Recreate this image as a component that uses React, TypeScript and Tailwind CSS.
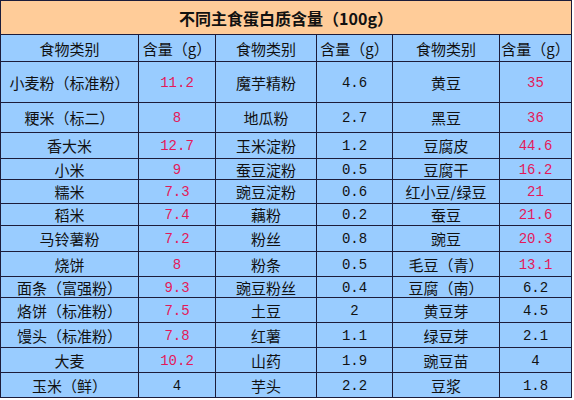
import { Fragment } from 'react';

const ROWS: Array<[string, string, string, string, string, string]> = [
  ['小麦粉（标准粉）', '11.2', '魔芋精粉', '4.6', '黄豆', '35'],
  ['粳米（标二）', '8', '地瓜粉', '2.7', '黑豆', '36'],
  ['香大米', '12.7', '玉米淀粉', '1.2', '豆腐皮', '44.6'],
  ['小米', '9', '蚕豆淀粉', '0.5', '豆腐干', '16.2'],
  ['糯米', '7.3', '豌豆淀粉', '0.6', '红小豆/绿豆', '21'],
  ['稻米', '7.4', '藕粉', '0.2', '蚕豆', '21.6'],
  ['马铃薯粉', '7.2', '粉丝', '0.8', '豌豆', '20.3'],
  ['烧饼', '8', '粉条', '0.5', '毛豆（青）', '13.1'],
  ['面条（富强粉）', '9.3', '豌豆粉丝', '0.4', '豆腐（南）', '6.2'],
  ['烙饼（标准粉）', '7.5', '土豆', '2', '黄豆芽', '4.5'],
  ['馒头（标准粉）', '7.8', '红薯', '1.1', '绿豆芽', '2.1'],
  ['大麦', '10.2', '山药', '1.9', '豌豆苗', '4'],
  ['玉米（鲜）', '4', '芋头', '2.2', '豆浆', '1.8'],
];

// rows whose last column is printed in red
const RED_LAST = 8;

const cjk = "font-['Noto_Sans_CJK_SC',sans-serif]";
const mono = "font-['Liberation_Mono','Noto_Sans_CJK_SC',monospace]";

function Cell({ text, num, red }: { text: string; num?: boolean; red?: boolean }) {
  return (
    <div
      className={`flex items-center justify-center bg-[#99ccff] whitespace-nowrap overflow-hidden pt-[2px] ${
        num ? `${mono} text-[14px]` : `${cjk} text-[15px]`
      } ${red ? 'text-[#e3195a]' : 'text-[#111]'}`}
    >
      {text}
    </div>
  );
}

export default function App() {
  return (
    <div className="w-[574px] h-[400px] bg-white">
      <div className="grid w-[572px] gap-px p-px bg-[#1c1c3a] grid-cols-[137px_76px_100px_75px_106px_71px] grid-rows-[33px_26px_40px_29px_25px_20px_23px_21px_25px_24px_20px_24px_24px_24px_24px]">
        <div className={`col-span-6 flex items-center justify-center bg-[#ffcc99] ${cjk} text-[16px] font-bold text-[#111]`}>
          不同主食蛋白质含量（100g）
        </div>
        {['食物类别', '含量（g）', '食物类别', '含量（g）', '食物类别', '含量（g）'].map((h, i) => (
          <Cell key={i} text={h} />
        ))}
        {ROWS.map((r, ri) => (
          <Fragment key={ri}>
            <Cell text={r[0]} />
            <Cell text={r[1]} num red={ri < 12} />
            <Cell text={r[2]} />
            <Cell text={r[3]} num />
            <Cell text={r[4]} />
            <Cell text={r[5]} num red={ri < RED_LAST} />
          </Fragment>
        ))}
      </div>
    </div>
  );
}
